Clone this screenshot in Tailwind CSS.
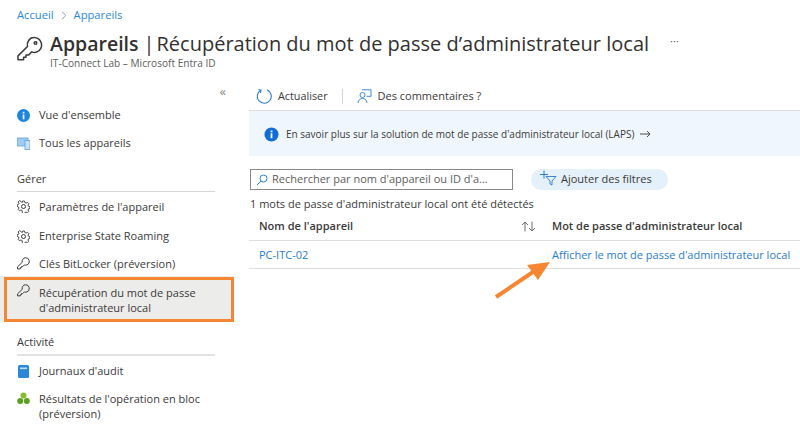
<!DOCTYPE html>
<html lang="fr">
<head>
    <meta charset="UTF-8">
    <title>Récupération du mot de passe d'administrateur local</title>
    <script src="https://cdn.jsdelivr.net/npm/@tailwindcss/browser@4"></script>
</head>
<body class="bg-white">
<div class="relative w-[800px] h-[440px] overflow-hidden bg-white font-['Open_Sans',sans-serif] text-[#323130]">

    <!-- breadcrumb + title -->
    <header class="h-[80px] pl-[17px] pt-[8px]">
        <div class="flex items-center h-[15px] text-[11.2px] text-[#2b88d8]">
            <a>Accueil</a>
            <svg class="mx-[7px]" width="6" height="9" viewBox="0 0 6 9" fill="none" stroke="#a19f9d"><path d="M1 .8 4.800 4.500 1 8.200"/></svg>
            <a>Appareils</a>
        </div>
        <div class="flex mt-[8px]">
            <svg class="mt-[5px]" width="26" height="26" viewBox="0 0 26 26" fill="none" stroke="#3b3a39" stroke-width="1.5" stroke-linejoin="round">
                <path d="M16.500 1.500a7.500 7.500 0 0 1 3.500 14.400c-1.800.8-3.600.7-5.200-.1l-3.300 3.300H9v2.200H6.600v2.400H1v-3.800l9.500-9.400c-1-4 2-9 6-9z"/>
                <circle cx="18.500" cy="7" r="1.300"/>
            </svg>
            <div class="ml-[7px]">
                <h1 class="flex text-[20px] leading-[26px] whitespace-nowrap"><span class="font-semibold text-[19.5px]">Appareils</span><span class="ml-[5px]">|</span><span class="ml-[2px]">Récupération du mot de passe d’administrateur local</span></h1>
                <p class="text-[10.1px] leading-[12px] text-[#605e5c]">IT-Connect Lab – Microsoft Entra ID</p>
            </div>
            <span class="ml-[21px] mt-[2px] text-[11px] text-[#605e5c]">···</span>
        </div>
    </header>

    <div class="flex">
        <!-- left nav -->
        <aside class="w-[249px] shrink-0 text-[11px] leading-[14px] text-[#3b3a39]">
            <div class="h-[21px] pr-[23px] flex justify-end items-center text-[13px] text-[#8a8886]">«</div>

            <div class="flex items-center h-[28px] pl-[17px]">
                <svg width="13" height="13" viewBox="0 0 13 13"><circle cx="6.500" cy="6.500" r="6.500" fill="#1b85e0"/><rect x="5.700" y="5.500" width="1.700" height="4.800" fill="#fff"/><rect x="5.700" y="2.800" width="1.700" height="1.700" fill="#fff"/></svg>
                <span class="ml-[9px]">Vue d'ensemble</span>
            </div>
            <div class="flex items-center h-[28px] pl-[17px]">
                <svg width="13" height="13" viewBox="0 0 13 13"><rect x="0" y="1" width="11" height="8" fill="#9fcdf2" stroke="#5ea0d8" stroke-width=".8"/><rect x="8" y="3.500" width="5" height="9" fill="#c7e2f7" stroke="#5ea0d8" stroke-width=".8"/></svg>
                <span class="ml-[9px]">Tous les appareils</span>
            </div>

            <div class="mt-[10px] ml-[17px] mr-[34px] h-[25px] pt-[5px] border-b border-[#d8d6d4] font-medium">Gérer</div>

            <div class="flex items-center h-[29px] pl-[17px]">
                <svg width="13" height="13" viewBox="0 0 13 13" fill="none" stroke="#3b3a39" stroke-width="1"><path d="M5.400 .8h2.200l.4 1.700 1.300.6 1.500-.9 1.500 1.500-.9 1.500.6 1.300 1.500.4v2l-1.500.4-.6 1.300.9 1.500-1.500 1.500-1.500-.9-1.300.6-.4 1.500H5.400L5 11.100l-1.300-.6-1.500.9L.7 9.900l.9-1.500L1 7.100-.5 6.700V5l1.500-.4.600-1.300-.9-1.500L2.200.3l1.500.9L5 2.500z" transform="translate(.5 .3) scale(.92)"/><circle cx="6.500" cy="6.500" r="2"/></svg>
                <span class="ml-[9px]">Paramètres de l'appareil</span>
            </div>
            <div class="flex items-center h-[28px] pt-[2px] pl-[17px]">
                <svg width="13" height="13" viewBox="0 0 13 13" fill="none" stroke="#3b3a39" stroke-width="1"><path d="M5.400 .8h2.200l.4 1.700 1.300.6 1.500-.9 1.500 1.500-.9 1.500.6 1.300 1.500.4v2l-1.500.4-.6 1.300.9 1.500-1.500 1.500-1.500-.9-1.300.6-.4 1.500H5.400L5 11.100l-1.300-.6-1.500.9L.7 9.900l.9-1.500L1 7.100-.5 6.700V5l1.500-.4.600-1.300-.9-1.500L2.200.3l1.500.9L5 2.500z" transform="translate(.5 .3) scale(.92)"/><circle cx="6.500" cy="6.500" r="2"/></svg>
                <span class="ml-[9px]">Enterprise State Roaming</span>
            </div>
            <div class="flex items-center h-[27px] pt-[2px] pl-[17px]">
                <svg width="13" height="13" viewBox="0 0 26 26" fill="none" stroke="#3b3a39" stroke-width="2" stroke-linejoin="round"><path d="M16.500 1.500a7.500 7.500 0 0 1 3.500 14.400c-1.800.8-3.600.7-5.200-.1l-3.300 3.300H9v2.200H6.600v2.400H1v-3.800l9.500-9.400c-1-4 2-9 6-9z"/></svg>
                <span class="ml-[9px]">Clés BitLocker (préversion)</span>
            </div>
            <div class="flex h-[45px] w-[233px] pl-[17px] pt-[8px] bg-[#ececea]">
                <svg class="shrink-0" width="13" height="13" viewBox="0 0 26 26" fill="none" stroke="#3b3a39" stroke-width="2" stroke-linejoin="round"><path d="M16.500 1.500a7.500 7.500 0 0 1 3.500 14.400c-1.800.8-3.600.7-5.200-.1l-3.300 3.300H9v2.200H6.600v2.400H1v-3.800l9.500-9.400c-1-4 2-9 6-9z"/></svg>
                <span class="ml-[9px] mt-px leading-[15px]">Récupération du mot de passe<br>d'administrateur local</span>
            </div>

            <div class="ml-[17px] mr-[34px] h-[35px] pt-[14px] border-b-2 border-[#e3e2e0] font-medium">Activité</div>

            <div class="flex items-center h-[28px] pt-[2px] pl-[17px]">
                <svg width="13" height="13" viewBox="0 0 13 13"><rect x="1" y="0" width="11" height="13" rx="1.500" fill="#2b88d8"/><rect x="3" y="2.500" width="7" height="1.600" fill="#bfe0f7"/></svg>
                <span class="ml-[9px]">Journaux d'audit</span>
            </div>
            <div class="flex pl-[17px] pt-[7px] leading-[15px]">
                <svg class="mt-[1px] shrink-0" width="13" height="13" viewBox="0 0 13 13"><circle cx="6.500" cy="3.500" r="3" fill="#86bc25"/><circle cx="3.200" cy="9" r="3" fill="#5e9e1f"/><circle cx="9.800" cy="9" r="3" fill="#5e9e1f"/></svg>
                <span class="ml-[9px]">Résultats de l'opération en bloc<br>(préversion)</span>
            </div>
        </aside>

        <!-- main content -->
        <main class="flex-1 min-w-0 text-[11px] text-[#3b3a39]">
            <div class="flex items-center h-[31px] pt-[2px] border-b border-[#e1dfdd] pl-[7px]">
                <svg width="16" height="16" viewBox="0 0 16 16" fill="none" stroke="#2b7cd3" stroke-width="1.100"><path d="M4.800 2.200A7 7 0 1 0 11 1.800"/><path d="M2.500 1.500 5 2.200 4.500 4.800"/></svg>
                <span class="ml-[6px] text-[10.8px]">Actualiser</span>
                <span class="w-px h-[15px] bg-[#d8d6d4] mx-[14px]"></span>
                <svg width="15" height="15" viewBox="0 0 15 15" fill="none" stroke="#2b7cd3" stroke-width=".9"><path d="M5 .8h9v6.500H9.500"/><circle cx="5.500" cy="6" r="2.500"/><path d="M1 14c.3-3 2-4.500 4.500-4.500S9.700 11 10 14"/></svg>
                <span class="ml-[6px]">Des commentaires ?</span>
            </div>

            <div class="flex items-center h-[45px] bg-[#f0f6fd] pl-[15px] pt-px">
                <svg width="15" height="15" viewBox="0 0 15 15"><circle cx="7.500" cy="7.500" r="7" fill="#0f6cd8"/><rect x="6.600" y="6.300" width="1.800" height="5" fill="#fff"/><rect x="6.600" y="3.500" width="1.800" height="1.800" fill="#fff"/></svg>
                <span class="ml-[7px] text-[10px]">En savoir plus sur la solution de mot de passe d'administrateur local (LAPS)</span>
                <svg class="ml-[6px]" width="11" height="8" viewBox="0 0 11 8" fill="none" stroke="#3b3a39" stroke-width=".9"><path d="M0 4h10M7 1l3 3-3 3"/></svg>
            </div>

            <div class="flex items-center mt-[13px] ml-px">
                <div class="flex items-center w-[263px] h-[21px] border border-[#8a8886] pl-[5px] text-[#605e5c]">
                    <svg width="12" height="12" viewBox="0 0 12 12" fill="none" stroke="#2b7cd3"><circle cx="7.500" cy="4.500" r="3.500"/><path d="M5 7 1 11"/></svg>
                    <span class="ml-[4px]">Rechercher par nom d'appareil ou ID d'a...</span>
                </div>
                <div class="flex items-center ml-[18px] w-[137px] h-[21px] rounded-full bg-[#e4f0fa] pl-[9px]">
                    <svg class="-mt-[3px]" width="18" height="16" viewBox="0 0 18 16" fill="none" stroke="#2b7cd3"><path d="M0 4.500h8M4 .5v8"/><path d="M6 6.500h10l-4 4.500v4l-2-1v-3z" stroke-width=".9"/></svg>
                    <span class="ml-[3px]">Ajouter des filtres</span>
                </div>
            </div>

            <p class="mt-[6px] ml-px h-[15px] leading-[15px]">1 mots de passe d'administrateur local ont été détectés</p>

            <div class="flex items-center h-[28px] mt-[2px] border-b border-[#e1dfdd] font-semibold">
                <span class="ml-[10px] w-[262px]">Nom de l'appareil</span>
                <svg width="16" height="11" viewBox="0 0 16 11" fill="none" stroke="#605e5c" stroke-width=".9"><path d="M4 10.500V1M1 4l3-3 3 3M11 .5V10M8 7l3 3 3-3"/></svg>
                <span class="ml-[15px]">Mot de passe d'administrateur local</span>
            </div>
            <div class="flex items-center h-[28px] pt-px border-b border-[#e1dfdd] text-[#2b7cc9]">
                <span class="ml-[10px] w-[293px]">PC-ITC-02</span>
                <span class="whitespace-nowrap">Afficher le mot de passe d'administrateur local</span>
            </div>
        </main>
    </div>

    <!-- annotations drawn over the screenshot -->
    <div class="absolute left-[4px] top-[277px] w-[230px] h-[45px] border-[3px] border-[#f58634]"></div>
    <svg class="absolute left-[490px] top-[255px]" width="65" height="50" viewBox="0 0 65 50" fill="none">
        <path d="M6 42 43 17" stroke="#f58634" stroke-width="4"/>
        <path d="M60 7 37 10 48 25z" fill="#f58634"/>
    </svg>
</div>
</body>
</html>
